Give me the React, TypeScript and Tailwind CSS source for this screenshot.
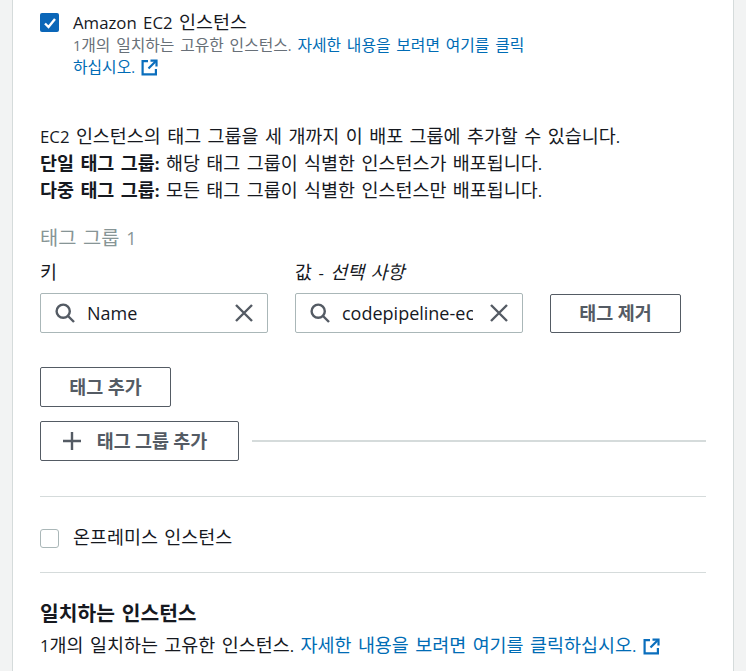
import React from 'react';

const font = { fontFamily: '"Open Sans", "Noto Sans CJK KR", sans-serif' };

// Hangul runs at a bigger size than the latin around them
const K = ({ t }: { t: string }) => (
  <>
    {t.split(/([\uAC00-\uD7A3]+)/).map((part, i) =>
      i % 2 === 1 ? (
        <span key={i} className="text-[1.1em] leading-none">{part}</span>
      ) : (
        part
      )
    )}
  </>
);

const ExternalIcon = () => (
  <svg viewBox="0 0 17 17" className="inline-block w-[17px] h-[17px] align-[-3px]" fill="none" stroke="#0a6ebd" strokeWidth="2.2">
    <path d="M7 2.1H1.6v13.3h13.3V10" />
    <path d="M9.5 1.6h6v6" />
    <path d="M15.2 1.8 7.5 9.5" />
  </svg>
);

const SearchIcon = () => (
  <svg viewBox="0 0 20 20" className="w-5 h-5 shrink-0" fill="none" stroke="#545b64" strokeWidth="2.4">
    <circle cx="8.2" cy="8.2" r="6.6" />
    <path d="m13 13 6 6" />
  </svg>
);

const CloseIcon = () => (
  <svg viewBox="0 0 18 18" className="w-[18px] h-[18px] shrink-0" fill="none" stroke="#545b64" strokeWidth="2.4">
    <path d="m1 1 16 16M17 1 1 17" />
  </svg>
);

const PlusIcon = () => (
  <svg viewBox="0 0 20 20" className="w-5 h-5 shrink-0" fill="none" stroke="#545b64" strokeWidth="2.4">
    <path d="M10 1v18M1 10h18" />
  </svg>
);

const TagInput = ({ value }: { value: string }) => (
  <div className="flex items-center w-[228px] h-10 pl-[14px] pr-[14px] bg-white border border-[#aab7b8] rounded-[2px] text-[18px]">
    <SearchIcon />
    <span className="ml-[12px] w-[131px] overflow-hidden whitespace-nowrap text-[#16191f]">{value}</span>
    <span className="ml-auto"><CloseIcon /></span>
  </div>
);

const OutlineButton = ({ children, className }: { children: React.ReactNode; className: string }) => (
  <button className={`flex items-center justify-center bg-white border border-[#545b64] rounded-[2px] font-bold text-[#545b64] ${className}`}>
    {children}
  </button>
);

export default function App() {
  return (
    <div style={font} className="h-[671px] overflow-hidden bg-[#f2f3f3] px-[12px] text-[16.8px] leading-[27px] [word-spacing:0.12em] text-[#16191f]">
      <div className="w-[722px] h-full bg-white border-x border-[#d5dbdb] pl-[27px] pr-[27px]">
        <div className="flex pt-[13px]">
          <div className="flex items-center justify-center w-[19px] h-[19px] rounded-[2px] bg-[#0a66b8]">
            <svg viewBox="0 0 14 14" className="w-[14px] h-[14px]" fill="none" stroke="white" strokeWidth="2.4">
              <path d="M2 7.5 5.5 11 12 3" />
            </svg>
          </div>
          <div className="ml-[14px] w-[452px]">
            <div className="leading-[20px]"><K t="Amazon EC2 인스턴스" /></div>
            <div className="mt-[2px] text-[14.4px] leading-[22px] text-[#687078]">
              <K t="1개의 일치하는 고유한 인스턴스." /> <span className="text-[#006cb5]"><K t="자세한 내용을 보려면 여기를 클릭하십시오." /> <ExternalIcon /></span>
            </div>
          </div>
        </div>

        <div className="mt-[44px]">
          <p><K t="EC2 인스턴스의 태그 그룹을 세 개까지 이 배포 그룹에 추가할 수 있습니다." /></p>
          <p><b><K t="단일 태그 그룹:" /></b> <K t="해당 태그 그룹이 식별한 인스턴스가 배포됩니다." /></p>
          <p><b><K t="다중 태그 그룹:" /></b> <K t="모든 태그 그룹이 식별한 인스턴스만 배포됩니다." /></p>
        </div>

        <div className="mt-[21px] text-[18px] text-[#879596]"><K t="태그 그룹 1" /></div>

        <div className="flex mt-[7px] gap-[27px]">
          <div>
            <div className="mb-[7px]"><K t="키" /></div>
            <TagInput value="Name" />
          </div>
          <div>
            <div className="mb-[7px]"><K t="값 - " /><i><K t="선택 사항" /></i></div>
            <TagInput value="codepipeline-ec2" />
          </div>
          <OutlineButton className="mt-[35px] w-[131px] h-[39px]"><span><K t="태그 제거" /></span></OutlineButton>
        </div>

        <OutlineButton className="mt-[34px] w-[131px] h-[40px]"><span><K t="태그 추가" /></span></OutlineButton>

        <div className="flex items-center mt-[14px]">
          <OutlineButton className="w-[199px] h-[40px] gap-[15px] pr-[10px]">
            <PlusIcon />
            <span><K t="태그 그룹 추가" /></span>
          </OutlineButton>
          <div className="flex-1 ml-[13px] h-[2px] bg-[#d5dbdb]" />
        </div>

        <div className="mt-[35px] h-px bg-[#d5dbdb]" />

        <div className="flex items-center mt-[28px]">
          <div className="w-[19px] h-[19px] rounded-[3px] bg-white border border-[#aab7b8]" />
          <span className="ml-[14px] leading-[25px] mb-[2px]"><K t="온프레미스 인스턴스" /></span>
        </div>

        <div className="mt-[20px] h-px bg-[#d5dbdb]" />

        <div className="mt-[27px] text-[18.5px] font-bold"><K t="일치하는 인스턴스" /></div>
        <div className="mt-[5px]">
          <K t="1개의 일치하는 고유한 인스턴스." /> <span className="text-[#006cb5]"><K t="자세한 내용을 보려면 여기를 클릭하십시오." /> <ExternalIcon /></span>
        </div>
      </div>
    </div>
  );
}
